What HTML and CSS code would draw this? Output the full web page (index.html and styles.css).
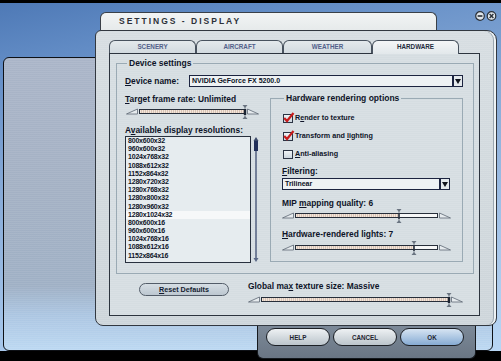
FILE: index.html
```html
<!DOCTYPE html>
<html>
<head>
<meta charset="utf-8">
<link rel="stylesheet" href="styles.css">
</head>
<body>
<div class="screen">
  <div class="desktop"></div>
  <div class="backpanel"></div>
  <div class="dialog">
    <div class="titlebar">
      <div class="titletab">SETTINGS - DISPLAY</div>
      <svg class="winctl" width="22" height="10" viewBox="0 0 22 10">
        <circle cx="5" cy="5" r="4.3" fill="#dfe5ea" stroke="#2a3038" stroke-width="1.2"/>
        <rect x="2.6" y="4.2" width="4.8" height="1.6" fill="#2a3038"/>
        <circle cx="16.5" cy="5" r="4.3" fill="#dfe5ea" stroke="#2a3038" stroke-width="1.2"/>
        <path d="M14.6 3.1 L18.4 6.9 M18.4 3.1 L14.6 6.9" stroke="#2a3038" stroke-width="1.4"/>
      </svg>
    </div>
    <div class="frame">
      <div class="tabs">
        <div class="tab">SCENERY</div>
        <div class="tab">AIRCRAFT</div>
        <div class="tab wide">WEATHER</div>
        <div class="tab active">HARDWARE</div>
      </div>
      <div class="panel">
        <fieldset class="group device">
          <legend>Device settings</legend>
          <div class="devrow">
            <span class="lbl devlbl"><u>D</u>evice name:</span>
            <div class="select devsel"><span class="seltext">NVIDIA GeForce FX 5200.0</span><span class="arrow"></span></div>
          </div>
          <div class="cols">
            <div class="leftcol">
              <div class="lbl frame-lbl"><u>T</u>arget frame rate: Unlimited</div>
              <div class="slider">
                <svg class="wedge" width="12" height="7" viewBox="0 0 12 7"><polygon points="11.5,1 0.5,6 11.5,6" fill="#e6ebee" stroke="#5c6672" stroke-width="0.8"/></svg>
                <div class="track"><div class="fill" style="width:100%"></div><svg class="thumb" style="left:100%" width="7" height="14" viewBox="0 0 7 14"><polygon points="1,0 6,0 3.5,3" fill="#6a7480"/><line x1="3.5" y1="2" x2="3.5" y2="12" stroke="#6a7480" stroke-width="0.8"/><rect x="2.3" y="4" width="2.4" height="6" fill="#1c2432"/><polygon points="1,14 6,14 3.5,11" fill="#6a7480"/></svg></div>
                <svg class="wedge" width="12" height="7" viewBox="0 0 12 7"><polygon points="0.5,1 11.5,6 0.5,6" fill="#e6ebee" stroke="#5c6672" stroke-width="0.8"/></svg>
              </div>
              <div class="lbl res-lbl">A<u>v</u>ailable display resolutions:</div>
              <div class="listwrap">
                <ul class="list">
                  <li>800x600x32</li>
                  <li>960x600x32</li>
                  <li>1024x768x32</li>
                  <li>1088x612x32</li>
                  <li>1152x864x32</li>
                  <li>1280x720x32</li>
                  <li>1280x768x32</li>
                  <li>1280x800x32</li>
                  <li>1280x960x32</li>
                  <li class="sel">1280x1024x32</li>
                  <li>800x600x16</li>
                  <li>960x600x16</li>
                  <li>1024x768x16</li>
                  <li>1088x612x16</li>
                  <li>1152x864x16</li>
                </ul>
                <div class="scrollbar">
                  <svg width="6" height="126" viewBox="0 0 6 126">
                    <line x1="3" y1="2" x2="3" y2="122" stroke="#5a6886" stroke-width="1.6"/>
                    <polygon points="0.5,4 3,0 5.5,4" fill="#3c4a6a"/>
                    <rect x="1" y="4" width="4" height="10" fill="#22305a"/>
                    <polygon points="0.5,121 3,125 5.5,121" fill="#5a6886"/>
                  </svg>
                </div>
              </div>
            </div>
            <fieldset class="group hw">
              <legend>Hardware rendering options</legend>
              <div class="check"><span class="cb"><svg class="tick" width="12" height="11" viewBox="0 0 12 11"><path d="M1.2 6 L4 9 L10.5 1" fill="none" stroke="#c81c1c" stroke-width="2.2"/></svg></span><span class="cblbl">R<u>e</u>nder to texture</span></div>
              <div class="check"><span class="cb"><svg class="tick" width="12" height="11" viewBox="0 0 12 11"><path d="M1.2 6 L4 9 L10.5 1" fill="none" stroke="#c81c1c" stroke-width="2.2"/></svg></span><span class="cblbl">Transform and <u>l</u>ighting</span></div>
              <div class="check"><span class="cb"></span><span class="cblbl"><u>A</u>nti-aliasing</span></div>
              <div class="lbl filt-lbl"><u>F</u>iltering:</div>
              <div class="select filtsel"><span class="seltext">Trilinear</span><span class="arrow"></span></div>
              <div class="lbl mip-lbl">MIP <u>m</u>apping quality: 6</div>
              <div class="slider">
                <svg class="wedge" width="12" height="7" viewBox="0 0 12 7"><polygon points="11.5,1 0.5,6 11.5,6" fill="#e6ebee" stroke="#5c6672" stroke-width="0.8"/></svg>
                <div class="track"><div class="fill" style="width:73%"></div><svg class="thumb" style="left:73%" width="7" height="14" viewBox="0 0 7 14"><polygon points="1,0 6,0 3.5,3" fill="#6a7480"/><line x1="3.5" y1="2" x2="3.5" y2="12" stroke="#6a7480" stroke-width="0.8"/><rect x="2.8" y="4" width="1.4" height="6" fill="#1c2432"/><polygon points="1,14 6,14 3.5,11" fill="#6a7480"/></svg></div>
                <svg class="wedge" width="12" height="7" viewBox="0 0 12 7"><polygon points="0.5,1 11.5,6 0.5,6" fill="#e6ebee" stroke="#5c6672" stroke-width="0.8"/></svg>
              </div>
              <div class="lbl lights-lbl"><u>H</u>ardware-rendered lights: 7</div>
              <div class="slider">
                <svg class="wedge" width="12" height="7" viewBox="0 0 12 7"><polygon points="11.5,1 0.5,6 11.5,6" fill="#e6ebee" stroke="#5c6672" stroke-width="0.8"/></svg>
                <div class="track"><div class="fill" style="width:84%"></div><svg class="thumb" style="left:84%" width="7" height="14" viewBox="0 0 7 14"><polygon points="1,0 6,0 3.5,3" fill="#6a7480"/><line x1="3.5" y1="2" x2="3.5" y2="12" stroke="#6a7480" stroke-width="0.8"/><rect x="2.8" y="4" width="1.4" height="6" fill="#1c2432"/><polygon points="1,14 6,14 3.5,11" fill="#6a7480"/></svg></div>
                <svg class="wedge" width="12" height="7" viewBox="0 0 12 7"><polygon points="0.5,1 11.5,6 0.5,6" fill="#e6ebee" stroke="#5c6672" stroke-width="0.8"/></svg>
              </div>
            </fieldset>
          </div>
        </fieldset>
        <div class="footer">
          <button class="pill reset"><u>R</u>eset Defaults</button>
          <div class="global">
            <div class="lbl">Global ma<u>x</u> texture size: Massive</div>
            <div class="slider">
              <svg class="wedge" width="12" height="7" viewBox="0 0 12 7"><polygon points="11.5,1 0.5,6 11.5,6" fill="#e6ebee" stroke="#5c6672" stroke-width="0.8"/></svg>
              <div class="track"><div class="fill" style="width:100%"></div><svg class="thumb" style="left:100%" width="7" height="14" viewBox="0 0 7 14"><polygon points="1,0 6,0 3.5,3" fill="#6a7480"/><line x1="3.5" y1="2" x2="3.5" y2="12" stroke="#6a7480" stroke-width="0.8"/><rect x="2.3" y="4" width="2.4" height="6" fill="#1c2432"/><polygon points="1,14 6,14 3.5,11" fill="#6a7480"/></svg></div>
              <svg class="wedge" width="12" height="7" viewBox="0 0 12 7"><polygon points="0.5,1 11.5,6 0.5,6" fill="#e6ebee" stroke="#5c6672" stroke-width="0.8"/></svg>
            </div>
          </div>
        </div>
      </div>
    </div>
    <div class="btnbar">
      <button class="bbtn">HELP</button>
      <button class="bbtn">CANCEL</button>
      <button class="bbtn ok">OK</button>
    </div>
  </div>
</div>
</body>
</html>
```

FILE: styles.css
```css
* { box-sizing: border-box; margin: 0; padding: 0; }
html, body { margin: 0; width: 501px; height: 361px; overflow: hidden; background: #000; }
body {
  font-family: "Liberation Sans", Arial, sans-serif;
  font-weight: bold;
  color: #0e1428;
}
u { text-decoration: underline; text-underline-offset: 1px; }

.screen { position: relative; width: 501px; height: 361px; background: #000; }

.desktop {
  margin-top: 3px;
  height: 348px;
  background:
    linear-gradient(168deg, #4e79b6 0%, #628cc5 14%, #86a9d6 40%, #a6c6ea 75%, #b8d6f4 100%);
}

.backpanel {
  position: absolute;
  left: 3px;
  top: 54px;
  width: 490px;
  height: 294px;
  border: 1px solid #0e1116;
  border-radius: 6px;
  background:
    repeating-linear-gradient(0deg, rgba(255,255,255,0.07) 0 1px, transparent 1px 2px),
    linear-gradient(180deg, #aab5c8 0%, #a4b1c4 45%, #9fb0c5 78%, #acc6e2 88%, #bcd8f2 100%);
}

.dialog {
  position: absolute;
  left: 95px;
  top: 9px;
  width: 402px;
}

.titlebar { display: flex; align-items: flex-start; height: 18px; }
.titletab {
  margin-left: 5px;
  width: 337px;
  height: 18px;
  border: 1px solid #3a4048;
  border-bottom: none;
  border-radius: 6px 6px 0 0;
  background: linear-gradient(180deg, #f2f4f4 0%, #e6eaeb 100%);
  padding-left: 18px;
  font-size: 8.5px;
  letter-spacing: 2px;
  line-height: 17px;
  color: #2c3038;
}
.winctl { margin-left: auto; margin-top: -1px; }

.frame {
  height: 296px;
  border: 1px solid #323840;
  border-radius: 6px 10px 8px 8px;
  padding: 9px 16px 9px 13px;
  background:
    repeating-linear-gradient(0deg, rgba(255,255,255,0.10) 0 1px, transparent 1px 2px),
    linear-gradient(180deg, #d6dde1 0%, #cdd5da 100%);
  box-shadow: inset -2px 0 0 #eef2f4, inset -3px 0 0 #9aa6b0;
}

.tabs { display: flex; height: 13px; position: relative; z-index: 1; }
.tab {
  width: 87px;
  height: 13px;
  border: 1px solid #48525e;
  border-bottom: none;
  border-radius: 6px 6px 0 0;
  background: linear-gradient(180deg, #e4e9ec 0%, #d2dadf 100%);
  font-size: 6.3px;
  line-height: 12px;
  text-align: center;
  color: #52608a;
}
.tab.wide { width: 89px; }
.tab.active {
  height: 14px;
  background: linear-gradient(180deg, #f4f6f7 0%, #e2e8eb 100%);
  color: #222a3c;
}

.panel {
  height: 263px;
  border: 1px solid #2c343e;
  padding: 4px 0 0 6px;
  background:
    repeating-linear-gradient(0deg, rgba(255,255,255,0.10) 0 1px, transparent 1px 2px),
    #d5dde1;
}

.group {
  border: 1px solid #9aaab4;
  min-width: 0;
}
.group legend {
  margin-left: 2px;
  padding: 0 2px;
  font-size: 8.5px;
  line-height: 11px;
  color: #0e1428;
}

.device {
  width: 358px;
  height: 216px;
  padding: 6px 9px 0 8px;
}

.lbl { font-size: 8.4px; line-height: 10px; white-space: nowrap; }

.devrow { display: flex; align-items: center; height: 12px; }
.devlbl { width: 64px; }

.select {
  display: flex;
  height: 12px;
  border: 1px solid #1c2440;
  background: #eef2f4;
}
.devsel { width: 274px; }
.seltext {
  flex: 1;
  font-size: 7px;
  line-height: 10px;
  padding-left: 2px;
  color: #0c1226;
  white-space: nowrap;
}
.arrow {
  width: 10px;
  border-left: 2px solid #1c2440;
  background: #e4e9ec;
  position: relative;
}
.arrow::after {
  content: "";
  position: absolute;
  left: 1px;
  top: 3px;
  border-left: 3px solid transparent;
  border-right: 3px solid transparent;
  border-top: 5px solid #10141c;
}

.cols { display: flex; align-items: flex-start; margin-top: 6px; }
.leftcol { width: 134px; margin-right: 11px; }
.frame-lbl { margin-top: 1px; }
.res-lbl { margin-top: 7px; }

.slider { display: flex; align-items: center; height: 14px; }
.wedge { flex: none; }
.leftcol .slider { margin-left: 1px; }
.track {
  position: relative;
  flex: 1;
  height: 5px;
  margin: 0 1px;
  border: 1px solid #262e3a;
  background: #f6f7f7;
}
.fill {
  height: 100%;
  background: repeating-linear-gradient(90deg, #f2e6da 0 1px, #d9c3b6 1px 2px);
}
.thumb {
  position: absolute;
  top: -5px;
  transform: translateX(-50%);
}

.listwrap { display: flex; align-items: flex-start; margin-top: 1px; }
.list {
  list-style: none;
  width: 127px;
  height: 127px;
  border: 1px solid #28303e;
  background: #e6ecef;
  overflow: hidden;
}
.list li {
  font-size: 7px;
  letter-spacing: -0.2px;
  line-height: 8.2px;
  height: 8.2px;
  padding-left: 2px;
  color: #0e1428;
}
.list li.sel { background: #f6f8f9; }
.scrollbar { margin-left: 2px; margin-top: 1px; width: 6px; }

.hw {
  width: 193px;
  height: 169px;
  padding: 9px 11px 0 11px;
}
.check { display: flex; align-items: center; height: 10px; margin-bottom: 8px; }
.cb {
  position: relative;
  width: 10px;
  height: 9px;
  margin-left: 1px;
  margin-right: 2px;
  border: 1px solid #2c3444;
  background: linear-gradient(180deg, #f0f4f6 0%, #ccd6de 100%);
}
.tick { position: absolute; left: -1px; top: -3px; }
.cblbl { font-size: 7.2px; line-height: 10px; white-space: nowrap; }
.filt-lbl { margin-top: -1.5px; }
.filtsel { width: 168px; margin-top: 2px; }
.mip-lbl { margin-top: 8px; }
.hw .slider { margin-top: 1px; }
.lights-lbl { margin-top: 6.5px; }

.footer { display: flex; align-items: flex-start; margin-top: 7px; }
.pill {
  font-family: inherit;
  font-weight: bold;
  cursor: default;
}
.reset {
  margin-left: 23px;
  margin-top: 2px;
  width: 90px;
  height: 13px;
  border: 1px solid #525c68;
  border-radius: 7px;
  background: linear-gradient(180deg, #d6dee4 0%, #bcc7d0 100%);
  font-size: 7.2px;
  line-height: 11px;
  color: #141c30;
}
.global { margin-left: 19px; width: 215px; }
.global .slider { margin-top: 1px; }

.btnbar {
  margin-left: 162px;
  width: 219px;
  height: 33px;
  border: 1px solid #15191e;
  border-top: none;
  border-radius: 0 0 6px 6px;
  background: linear-gradient(180deg, #7c8998 0%, #6a7684 100%);
  display: flex;
  gap: 3px;
  padding: 2px 0 0 8px;
}
.bbtn {
  width: 64px;
  height: 18px;
  border: 1.5px solid #1c2026;
  border-radius: 9px;
  background: linear-gradient(180deg, #eef1f3 0%, #cfd6db 60%, #bcc5cc 100%);
  font-family: inherit;
  font-weight: bold;
  font-size: 6.3px;
  color: #1e2430;
  cursor: default;
}
.bbtn.ok { background: linear-gradient(180deg, #d6e4f2 0%, #a6c2e0 60%, #86aad2 100%); }
```
